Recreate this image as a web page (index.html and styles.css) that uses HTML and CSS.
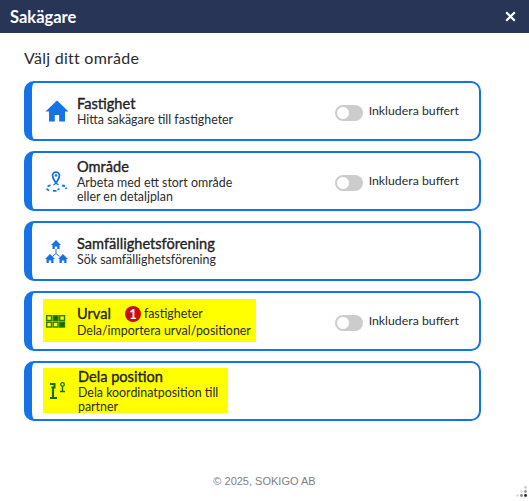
FILE: index.html
```html
<!DOCTYPE html>
<html lang="en">
  <head>
    <meta charset="UTF-8" />
    <meta name="viewport" content="width=device-width, initial-scale=1.0" />
    <title>Sakägare</title>
    <link rel="stylesheet" href="styles.css">
  </head>
  <body>
    <div class="dialog">
      <header class="head">
        <span class="head-title">Sakägare</span>
        <svg class="head-close" width="11" height="11" viewBox="0 0 11 11">
          <path d="M1.2 1.2l8.6 8.6M9.8 1.2l-8.6 8.6" stroke="#fff" stroke-width="2.2" fill="none" />
        </svg>
      </header>
      <main class="content">
        <h1 class="lead">Välj ditt område</h1>

        <div class="card">
          <div class="info">
            <svg class="icon" width="24" height="24" viewBox="0 0 24 24">
              <path fill="#1473e6" d="M12 1.500L.5 12.500h3.500V22.500h5.800v-6.500h4.400v6.500H20V12.500h3.500z" />
            </svg>
            <div class="text">
              <div class="name">Fastighet</div>
              <div class="desc">Hitta sakägare till fastigheter</div>
            </div>
          </div>
          <label class="buffer"><span class="switch"></span>Inkludera buffert</label>
        </div>

        <div class="card">
          <div class="info">
            <svg class="icon" width="24" height="24" viewBox="0 0 24 24">
              <g fill="none" stroke="#1473e6" stroke-width="1.800">
                <path d="M11 14c-1.800-2.800-3.400-4.700-3.400-7.500a3.400 3.400 0 0 1 6.800 0c0 2.800-1.600 4.700-3.400 7.500z" />
                <path d="M11 14l-2.500 2M11 14l2.500 2" stroke-width="1.200" />
                <path d="M5.500 16l-3 1.500M1.800 19.500c.3 1 1 1.600 2.200 2M8 21.800h3.500M12.500 20.800l2-1M17 16.500l3 .5M20.800 18.500l.5 1.500" />
              </g>
              <circle cx="11" cy="6.500" r="1.300" fill="#1473e6" />
            </svg>
            <div class="text">
              <div class="name">Område</div>
              <div class="desc">Arbeta med ett stort område<br />eller en detaljplan</div>
            </div>
          </div>
          <label class="buffer"><span class="switch"></span>Inkludera buffert</label>
        </div>

        <div class="card">
          <div class="info">
            <svg class="icon" width="24" height="24" viewBox="0 0 24 24">
              <path fill="#1473e6" d="M11 1L6 6h1.500v4h2.300V7.500h2.400V10h2.300V6H16zM5 15L0 20h1.500v4h2.300v-2.500h2.400V24h2.300v-4H10zM18 15l-5 5h1.500v4h2.300v-2.500h2.400V24h2.300v-4H23z" />
              <path fill="none" stroke="#1473e6" stroke-width="1" d="M11 10v4.500M11 14.500l-3.500 3M11 14.500l3.500 3" />
            </svg>
            <div class="text">
              <div class="name">Samfällighetsförening</div>
              <div class="desc">Sök samfällighetsförening</div>
            </div>
          </div>
        </div>

        <div class="card">
          <div class="info marked marked-urval">
            <svg class="icon" width="24" height="24" viewBox="0 0 24 24">
              <g fill="#ffff00" stroke="#2f7a00" stroke-width="1.400">
                <rect x="1.700" y="6.700" width="4.800" height="4.800" />
                <rect x="8.200" y="6.700" width="4.800" height="4.800" fill="#0f6a00" />
                <rect x="14.700" y="6.700" width="4.800" height="4.800" />
                <rect x="1.700" y="13.200" width="4.800" height="4.800" />
                <rect x="8.200" y="13.200" width="4.800" height="4.800" />
                <rect x="14.700" y="13.200" width="4.800" height="4.800" fill="#0f6a00" />
              </g>
            </svg>
            <div class="text">
              <div class="name-row">
                <span class="name">Urval</span>
                <span class="badge">1</span>
                <span class="count">fastigheter</span>
              </div>
              <div class="desc">Dela/importera urval/positioner</div>
            </div>
          </div>
          <label class="buffer"><span class="switch"></span>Inkludera buffert</label>
        </div>

        <div class="card">
          <div class="info marked marked-dela">
            <svg class="icon" width="24" height="24" viewBox="0 0 24 24">
              <g fill="none" stroke="#0f7000">
                <path d="M5 5h4.500v3.500H6.500" stroke-width="2" />
                <path d="M8 8v11M5 19h7" stroke-width="2.200" />
                <circle cx="17.500" cy="5.500" r="1.800" stroke-width="1.300" />
                <path d="M17.500 7.500v4.500M15 12.500h5" stroke-width="1.400" />
              </g>
            </svg>
            <div class="text">
              <div class="name">Dela position</div>
              <div class="desc">Dela koordinatposition till partner</div>
            </div>
          </div>
        </div>
      </main>
      <footer class="foot">© 2025, SOKIGO AB</footer>
      <svg class="grip" width="12" height="12" viewBox="0 0 12 12">
        <circle cx="9.500" cy="1.500" r="1.400" fill="#ccc" />
        <circle cx="5.500" cy="5.500" r="1.400" fill="#ddd" />
        <circle cx="9.500" cy="5.500" r="1.400" fill="#999" />
        <circle cx="1.500" cy="9.500" r="1.400" fill="#ddd" />
        <circle cx="5.500" cy="9.500" r="1.400" fill="#888" />
        <circle cx="9.500" cy="9.500" r="1.400" fill="#222" />
      </svg>
    </div>
  </body>
</html>
```

FILE: styles.css
```css
html,
body {
  margin: 0;
  height: 100%;
}

body {
  font-family: "Lato", "Liberation Sans", sans-serif;
  color: #2b2b2b;
  background-color: #fff;
}

.dialog {
  position: relative;
  display: flex;
  flex-direction: column;
  height: 501px;
  overflow: hidden;
}

.head {
  display: flex;
  align-items: center;
  justify-content: space-between;
  height: 33px;
  padding: 0 13px 0 10px;
  background-color: #283556;
  color: #fff;
}

.head-title {
  font-size: 16.5px;
  font-weight: 700;
}

.content {
  flex: 1;
  padding: 15px 48px 0 24px;
}

.lead {
  margin: 0 0 14px;
  font-size: 16px;
  line-height: 19px;
  font-weight: 400;
  letter-spacing: 0.25px;
}

.card {
  display: flex;
  align-items: center;
  justify-content: space-between;
  box-sizing: border-box;
  height: 60px;
  margin-bottom: 10px;
  padding-left: 11px;
  padding-right: 20px;
  border: 2px solid #1473e6;
  border-left-width: 8px;
  border-radius: 10px;
}

.info {
  display: flex;
  align-items: center;
  padding-left: 2px;
}

.icon {
  flex: none;
  margin: 0 8px 0 0;
}

.text {
  width: 190px;
  padding-top: 1px;
}

.name {
  font-size: 14.6px;
  line-height: 15px;
  font-weight: 400;
  -webkit-text-stroke: 0.35px #222;
  color: #222;
}

.desc {
  padding-top: 2px;
  font-size: 12.4px;
  line-height: 14px;
}

.name-row {
  display: flex;
  align-items: center;
}

.badge {
  display: flex;
  align-items: center;
  justify-content: center;
  width: 16px;
  height: 16px;
  margin: 0 3px 0 14px;
  border-radius: 50%;
  background-color: #c80f0f;
  color: #fff;
  font-size: 13px;
  font-weight: 700;
}

.count {
  font-size: 12.4px;
}

.marked {
  margin-bottom: 1px;
  background-color: #ffff00;
}

.marked .text {
  padding-top: 2px;
}

.marked-urval {
  height: 43px;
}

.marked-urval .text {
  width: 179px;
}

.marked-dela {
  height: 45px;
}

.marked-dela .icon {
  margin-right: 9px;
}

.marked-dela .text {
  width: 150px;
}

.buffer {
  display: flex;
  align-items: center;
  font-size: 12.3px;
  line-height: 14px;
}

.switch {
  position: relative;
  width: 28px;
  height: 16px;
  margin: 4px 6px 0 0;
  border-radius: 8px;
  background-color: #ccc;
}

.switch::before {
  content: "";
  position: absolute;
  top: 1px;
  left: 1px;
  width: 12px;
  height: 12px;
  border: 1px solid #ccc;
  border-radius: 50%;
  background-color: #fff;
}

.foot {
  padding-bottom: 13px;
  text-align: center;
  font-family: "Liberation Sans", sans-serif;
  font-size: 11px;
  line-height: 14px;
  color: #808080;
}

.grip {
  position: absolute;
  right: 1px;
  bottom: 3px;
}
```
